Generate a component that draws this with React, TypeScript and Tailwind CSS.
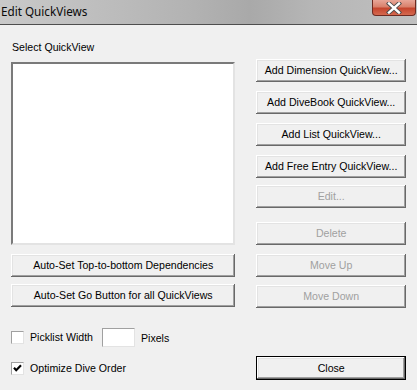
import React from "react";

const btn =
  "h-[23px] w-full flex items-center justify-center bg-[#f0f0f0] shadow-[inset_-1px_-1px_#696969,inset_1px_1px_#ffffff,inset_-2px_-2px_#a0a0a0,inset_2px_2px_#e3e3e3] text-[10.6px] leading-none";

function Button({ label, disabled = false }: { label: string; disabled?: boolean }) {
  return (
    <div className={`${btn} ${disabled ? "text-[#a0a0a0]" : "text-black"}`}>{label}</div>
  );
}

function Checkbox({ checked }: { checked?: boolean }) {
  return (
    <div className="w-[13px] h-[13px] bg-white border border-t-[#a0a0a0] border-l-[#a0a0a0] border-b-[#e3e3e3] border-r-[#e3e3e3] flex items-center justify-center">
      {checked && (
        <svg width="9" height="9" viewBox="0 0 9 9">
          <path d="M1 3.8 L3.2 6.2 L8 1.2" stroke="#000" strokeWidth="2.2" fill="none" />
        </svg>
      )}
    </div>
  );
}

export default function App() {
  return (
    <div className="w-[417px] h-[390px] bg-[#f0f0f0] font-['Liberation_Sans',Arial,sans-serif] overflow-hidden">
      {/* Title bar */}
      <div className="relative h-[25px] border-b border-[#4e4e4e] bg-[linear-gradient(90deg,#c9c9c9_0%,#bdbdbd_25%,#b3b3b3_45%,#a9a9a9_60%,#b6b6b6_75%,#c0c0c0_100%)]">
        <span className="absolute left-[1px] top-[3px] text-[11.7px] text-[#0a0a0a] font-['Noto_Sans',sans-serif] leading-[17px]">
          Edit QuickViews
        </span>
        <div className="absolute right-[1px] top-0 w-[44px] h-[16px] rounded-b-[4px] border border-t-0 border-[#6e2a20] bg-[linear-gradient(180deg,#e8a698_0%,#d9816c_45%,#c5452d_55%,#d5694f_100%)] flex items-center justify-center">
          <svg width="16" height="12" viewBox="0 0 16 12">
            <path d="M3 1.5 L13 10.5 M13 1.5 L3 10.5" stroke="#4b4b4b" strokeWidth="4.2" strokeLinecap="square" />
            <path d="M3 1.5 L13 10.5 M13 1.5 L3 10.5" stroke="#ffffff" strokeWidth="2.4" strokeLinecap="square" />
          </svg>
        </div>
      </div>

      {/* Body */}
      <div className="flex px-[11px]">
        {/* Left column */}
        <div className="w-[225px] flex flex-col">
          <div className="mt-[16px] h-[13px] text-[10.6px] leading-[13px] text-black pl-[1px]">Select QuickView</div>
          <div className="mt-[8px] h-[183px] bg-white border-2 border-t-[#7a7a7a] border-l-[#7a7a7a] border-b-[#e3e3e3] border-r-[#e3e3e3]" />
          <div className="mt-[9px]">
            <Button label="Auto-Set Top-to-bottom Dependencies" />
          </div>
          <div className="mt-[7px]">
            <Button label="Auto-Set Go Button for all QuickViews" />
          </div>
          <div className="mt-[21px] h-[19px] flex items-center text-[10.6px] text-black">
            <Checkbox />
            <span className="ml-[6px]">Picklist Width</span>
            <div className="ml-[9px] w-[33px] h-[19px] bg-white border border-t-[#a0a0a0] border-l-[#a0a0a0] border-b-[#e3e3e3] border-r-[#e3e3e3]" />
            <span className="ml-[6px] mt-[2px]">Pixels</span>
          </div>
          <div className="mt-[15px] h-[13px] flex items-center text-[10.6px] text-black">
            <Checkbox checked />
            <span className="ml-[6px]">Optimize Dive Order</span>
          </div>
        </div>

        {/* Right column */}
        <div className="ml-[21px] w-[150px] flex flex-col">
          <div className="mt-[34px]">
            <Button label="Add Dimension QuickView..." />
          </div>
          <div className="mt-[9px]">
            <Button label="Add DiveBook QuickView..." />
          </div>
          <div className="mt-[9px]">
            <Button label="Add List QuickView..." />
          </div>
          <div className="mt-[9px]">
            <Button label="Add Free Entry QuickView..." />
          </div>
          <div className="mt-[7px]">
            <Button label="Edit..." disabled />
          </div>
          <div className="mt-[14px]">
            <Button label="Delete" disabled />
          </div>
          <div className="mt-[9px]">
            <Button label="Move Up" disabled />
          </div>
          <div className="mt-[8px]">
            <Button label="Move Down" disabled />
          </div>
          <div className="mt-[48px] border border-black">
            <div className="h-[22px] w-full flex items-center justify-center bg-[#f0f0f0] shadow-[inset_-1px_-1px_#696969,inset_1px_1px_#ffffff,inset_-2px_-2px_#a0a0a0,inset_2px_2px_#e3e3e3] text-[10.6px] leading-none text-black">
              Close
            </div>
          </div>
        </div>
      </div>
    </div>
  );
}
